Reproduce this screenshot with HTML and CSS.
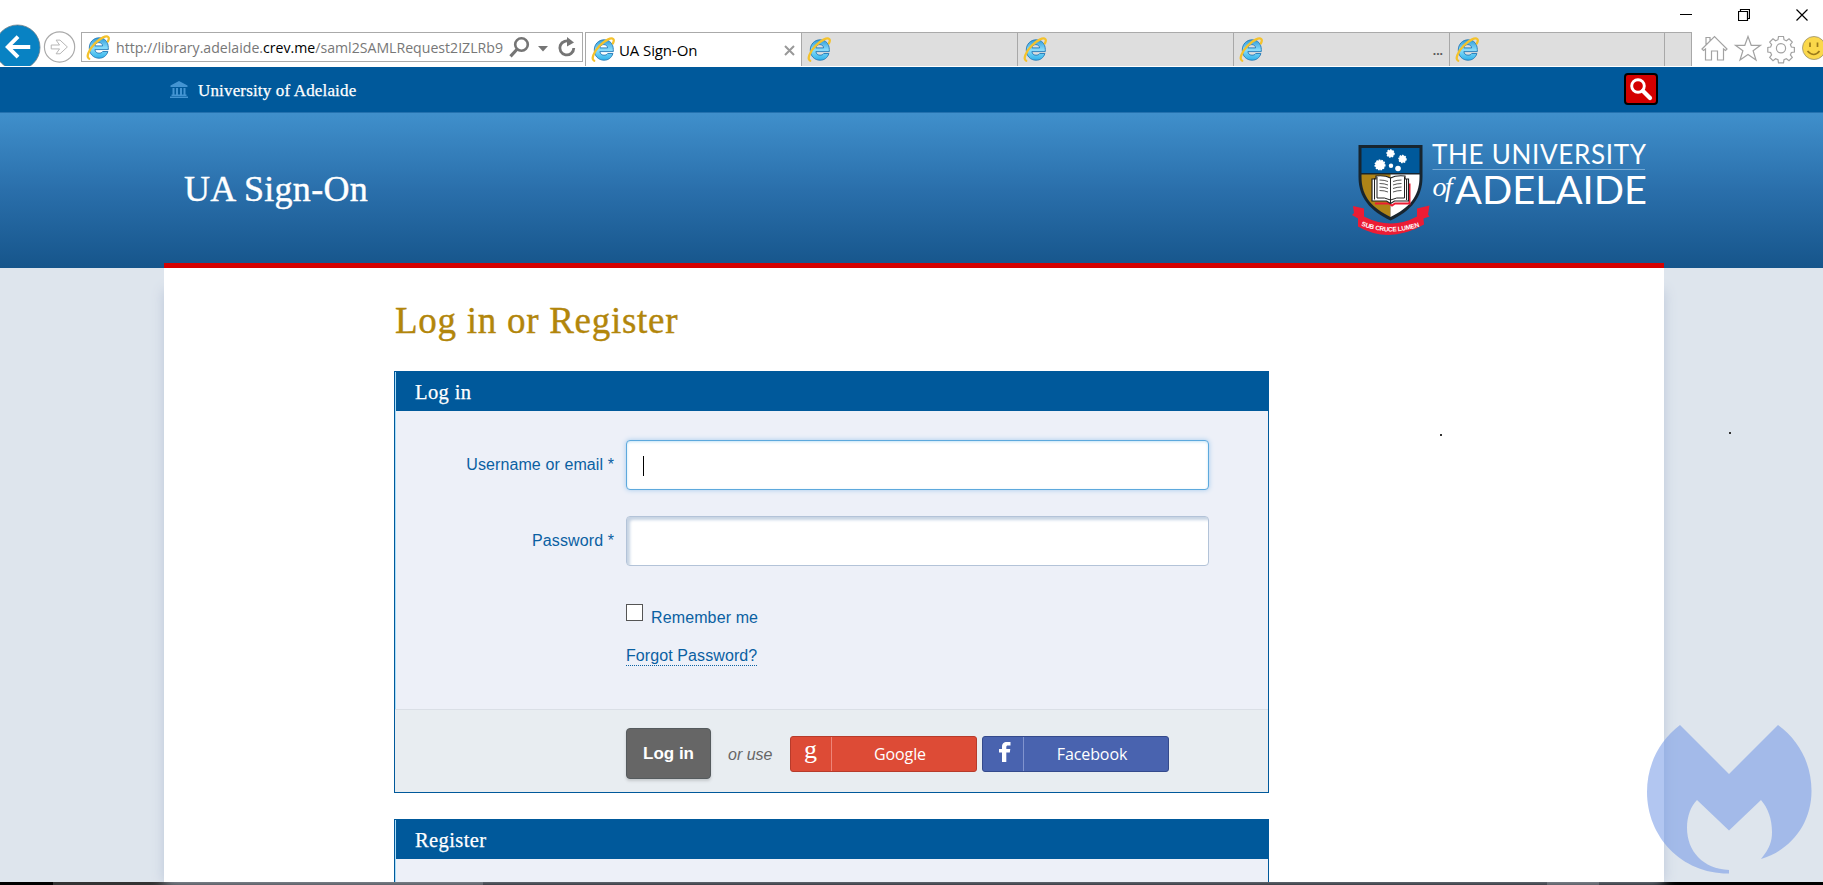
FILE: index.html
```
<!DOCTYPE html>
<html lang="en">
<head>
<meta charset="utf-8">
<title>UA Sign-On</title>
<link rel="stylesheet" href="styles.css">
</head>
<body>
<svg width="0" height="0" class="defs">
  <defs>
    <linearGradient id="ieBlue" x1="0" y1="0" x2="0" y2="1">
      <stop offset="0" stop-color="#2f9bdb"/><stop offset=".5" stop-color="#8adcf9"/><stop offset="1" stop-color="#2fb2ea"/>
    </linearGradient>
    <symbol id="ie" viewBox="0 0 24 25">
      <path d="M22.300 14.600H8.900c.2 2.300 1.900 3.600 4.100 3.600 1.700 0 2.900-.5 3.700-1.700h5.200c-1.300 4.300-4.600 6.700-8.700 6.700-5.900 0-9.900-4.300-9.900-10.100 0-6 4.200-10.300 9.900-10.300 5.700 0 9.100 4.200 9.100 9.800zM8.900 10.900h7.700c-.2-2.100-1.700-3.300-3.800-3.300s-3.600 1.300-3.900 3.300z" fill="url(#ieBlue)" stroke="#2278b5" stroke-width=".9"/>
      <path d="M3.200 23.800C-.2 22.300 2.600 15 8.600 8.800 14 3.200 20.200.2 22.200 2c.9.900.7 2.500-.3 4.400" fill="none" stroke="#f4c22c" stroke-width="2.300" stroke-linecap="round"/>
    </symbol>
  </defs>
</svg>

<header class="chrome">
  <div class="titlebar">
    <svg width="12" height="12" viewBox="0 0 12 12"><path d="M0 5.500h12" stroke="#000"/></svg>
    <svg width="12" height="12" viewBox="0 0 12 12"><path d="M.5 2.500h9v9h-9zM2.500 2.500v-2h9v9h-2" fill="none" stroke="#000" stroke-width="1.200"/></svg>
    <svg width="12" height="12" viewBox="0 0 12 12"><path d="M.5.5l11 11M11.500.5l-11 11" stroke="#000" stroke-width="1.200"/></svg>
  </div>
  <div class="toolbar">
    <svg class="nav" width="81" height="43" viewBox="0 0 81 43">
      <circle cx="17" cy="24" r="23" fill="#0882c3" stroke="#6f7f88" stroke-width=".8"/>
      <path d="M30 23.500H7M17.500 13L7 23.500l10.500 10.500" fill="none" stroke="#fff" stroke-width="4"/>
      <circle cx="60" cy="23.500" r="15.500" fill="#fff" stroke="#aaa" stroke-width="1.200"/>
      <path d="M51.500 21.500h8.500l-3.500-5h4l7.500 7-7.500 7h-4l3.500-5h-8.500z" fill="#fff" stroke="#b4b4b4"/>
    </svg>
    <div class="address">
      <svg class="ie" width="24" height="25"><use href="#ie"/></svg>
      <svg class="url" width="390" height="28"><text x="0" y="20" textLength="387" lengthAdjust="spacingAndGlyphs">http://library.adelaide.<tspan fill="#000">crev.me</tspan>/saml2SAMLRequest2IZLRb9</text></svg>
      <svg width="70" height="28" viewBox="0 0 70 28">
        <circle cx="15.500" cy="11.500" r="6.300" fill="none" stroke="#757575" stroke-width="2.600"/>
        <path d="M11.300 16L4.500 23.300" stroke="#757575" stroke-width="3.200"/>
        <path d="M32 13h10l-5 5.500z" fill="#757575"/>
        <path d="M64.500 9A7 7 0 1 0 67.800 15" fill="none" stroke="#757575" stroke-width="2.800"/>
        <path d="M61 4l7 5.500-7 4z" fill="#757575"/>
      </svg>
    </div>
    <div class="tabs">
      <div class="tab active"><svg class="ie" width="24" height="25"><use href="#ie"/></svg><span>UA Sign-On</span>
        <svg class="close" width="11" height="11" viewBox="0 0 11 11"><path d="M1 1l9 9M10 1l-9 9" stroke="#999" stroke-width="2"/></svg></div>
      <div class="tab"><svg class="ie" width="24" height="25"><use href="#ie"/></svg></div>
      <div class="tab"><svg class="ie" width="24" height="25"><use href="#ie"/></svg></div>
      <div class="tab"><svg class="ie" width="24" height="25"><use href="#ie"/></svg><b>...</b></div>
      <div class="tab"><svg class="ie" width="24" height="25"><use href="#ie"/></svg></div>
      <div class="newtab"></div>
    </div>
    <svg class="tools" width="123" height="43" viewBox="0 0 123 43">
      <g fill="#fff" stroke="#a2a2a2" stroke-width="1.200">
        <path d="M2 25L14.500 12.500 27 25l-1.500 1.500-2-1.500V36h-6v-9h-6v9h-6V25l-2 1.500zM6 20.500v-7h4v3.500"/>
        <path d="M48 12.500l3.200 8.800h9.300l-7.400 5.500 2.900 9.200-8-5.600-8 5.600 2.900-9.200-7.400-5.500h9.300z"/>
        <path d="M78.500 12.500h5l.5 3.200 2.400 1 2.600-1.900 3.300 3.300-1.900 2.600 1 2.300 3 .5v4.500l-3 .5-1 2.400 1.900 2.500-3.300 3.300-2.600-1.900-2.400 1-.5 3h-5l-.5-3-2.400-1-2.600 1.900-3.300-3.300 1.900-2.500-1-2.400-2.800-.5v-4.500l2.800-.5 1-2.300-1.900-2.600 3.300-3.300 2.600 1.900 2.400-1z"/>
        <circle cx="81" cy="24.200" r="4.600"/>
      </g>
      <circle cx="114" cy="24" r="11.500" fill="#fbd84b" stroke="#999072" stroke-width=".8"/>
      <path d="M110 18.500V23M117.500 18.500V23M107.500 27q6.500 7 12 0" fill="none" stroke="#9b7a1b" stroke-width="1.700"/>
    </svg>
  </div>
</header>

<div class="topbar">
  <a class="uni">
    <svg width="18" height="17" viewBox="0 0 18 17"><path d="M9 0l8.500 4.500V6H.5V4.500zM2.500 7h2v6.500h-2zM6 7h2v6.500H6zM10 7h2v6.500h-2zM13.500 7h2v6.500h-2zM1.500 13.500h15V15h-15zM0 15.500h18V17H0z" fill="#4394d2"/></svg>
    <span>University of Adelaide</span>
  </a>
  <div class="search"><svg width="30" height="28" viewBox="0 0 30 28"><circle cx="12" cy="11" r="6.300" fill="none" stroke="#fff" stroke-width="2.900"/><path d="M17 16l7 7" stroke="#fff" stroke-width="4.200" stroke-linecap="round"/></svg></div>
</div>

<div class="banner">
  <h2>UA Sign-On</h2>
  <svg class="logo" width="300" height="100" viewBox="1350 140 300 100">
    <path d="M1353 206l11 2.500v8q27 14 53 0v-8l12.500-3-1.500 9 1.500 2-6 2 .5 6q-35 20-66 2v-8l-6-3.500 2-2z" fill="#ec1c34"/>
    <path d="M1358.500 145h64v32c0 21-12 34-32 43.500-20-9.500-32-22.500-32-43.500z" fill="#17252f"/>
    <path d="M1361.500 148h58v25h-58z" fill="#00599b"/>
    <path d="M1361.500 174.500h29V217c-18-9-29-20-29-40z" fill="#af8417"/>
    <path d="M1390.500 174.500h29v2.500c0 20-11 31-29 40z" fill="#fff"/>
    <g fill="none" stroke="#fff" stroke-dasharray="1.600 1">
      <circle cx="1390.500" cy="153.500" r="3.500" stroke-width="1.500"/><circle cx="1402.500" cy="159" r="3.500" stroke-width="1.500"/><circle cx="1380" cy="165" r="4.800" stroke-width="1.500"/>
    </g>
    <g fill="#fff"><circle cx="1390.500" cy="153.500" r="3.500"/><circle cx="1402.500" cy="159" r="3.500"/><circle cx="1380" cy="165" r="4.800"/><circle cx="1391" cy="165.700" r="2.200"/><circle cx="1398" cy="168.500" r="2.800"/></g>
    <path d="M1375 203.500h14l3 2 3-2h14.500v-20" fill="none" stroke="#ec1c34" stroke-width="2"/>
    <path d="M1372 179h4v-3q9-1 14.500 2 5.500-3 14.500-2v3h3.500v22h-14l-4 2.500-4-2.500H1372z" fill="#fff" stroke="#222" stroke-width="1.200"/>
    <path d="M1374.500 178v21.500M1377 177v21q8-1 13.500 2 5.500-3 14-2v-21M1406.500 179v21M1390.500 178v26" fill="none" stroke="#222"/>
    <path d="M1379.500 180q5 0 8.500 1.500m-8.500 2q5 0 8.500 1.500m-8.500 2q5 0 8.500 1.500m-8.500 2q5 0 8.500 1.500M1393 181.500q4-1.500 8.500-1.500m-8.500 5q4-1.500 8.500-1.500m-8.500 5q4-1.500 8.500-1.500m-8.500 5q4-1.500 8.500-1.500" fill="none" stroke="#444" stroke-width=".9"/>
    <path id="motto" d="M1361 225.500Q1391 237.500 1422 225.500" fill="none"/>
    <text class="motto"><textPath href="#motto" textLength="60">SUB CRUCE LUMEN</textPath></text>
    <text class="word" x="1432" y="164" font-size="26" textLength="214">THE UNIVERSITY</text>
    <path d="M1432.500 169.500H1645" stroke="#75a9d4"/>
    <text class="of" x="1432.500" y="196" textLength="20">of</text>
    <text class="word" x="1455" y="203.500" font-size="39" textLength="192" lengthAdjust="spacingAndGlyphs">ADELAIDE</text>
  </svg>
</div>

<main class="page">
  <div class="sheet">
    <h1>Log in or Register</h1>
    <section class="panel">
      <h3>Log in</h3>
      <div class="form">
        <div class="row"><label>Username or email *</label><div class="input focus"><i></i></div></div>
        <div class="row"><label>Password *</label><div class="input"></div></div>
        <div class="remember"><span class="check"></span><span>Remember me</span></div>
        <div class="forgot"><a>Forgot Password?</a></div>
      </div>
      <div class="actions">
        <div class="login">Log in</div>
        <em>or use</em>
        <div class="social google">
          <div class="glyph g">g</div><span>Google</span>
        </div>
        <div class="social facebook">
          <div class="glyph"><svg width="12" height="20" viewBox="0 0 12 20"><path d="M3 20v-9.500H0V7h3V5c0-3.500 1.600-5 5-5h3.500v3.500H9c-1.300 0-1.700.6-1.700 1.700V7h4l-.5 3.500H7.300V20z" fill="#fff"/></svg></div><span>Facebook</span>
        </div>
      </div>
    </section>
    <section class="panel next"><h3>Register</h3><div class="form"></div></section>
  </div>
  <span class="speck one"></span><span class="speck two"></span>
  <svg class="badge" width="166" height="150" viewBox="0 0 166 150">
    <path d="M33 0L82 49 131 0C153 16 164.500 40 164.500 66c0 32-20 59-50.500 68 9-11 11-18 11-27 0-13-4-24-11-32L82 105.500 50 75c-6 6-10 16-10 28 0 23 16 41 42 42v3.500C35 149 0 112 0 67 0 40 12 16 33 0z" fill="#7096e6" fill-opacity=".54"/>
  </svg>
</main>
<footer class="taskbar"><i></i><b></b></footer>
</body>
</html>
```
FILE: styles.css
```
* { box-sizing: border-box; }
body {
  margin: 0; width: 1823px; height: 885px; overflow: hidden;
  display: flex; flex-direction: column; background: #fff;
  font-family: "Liberation Sans", Arial, sans-serif; font-size: 16px; color: #0a60a2;
}
svg { display: block; flex: none; }
h1, h2, h3 { margin: 0; font-family: "Liberation Serif", Georgia, serif; font-weight: 400; -webkit-text-stroke: .4px currentColor; }
.defs { position: absolute; }

/* Browser frame */
.chrome { height: 67px; flex: none; display: flex; flex-direction: column; }
.titlebar { height: 24px; flex: none; display: flex; justify-content: flex-end; gap: 46px; padding: 9px 15px 0 0; }
.toolbar { height: 43px; display: flex; }
.nav { height: 42px; }
.address {
  width: 502px; height: 30px; margin-top: 8px; border: 1px solid #aaa; flex: none;
  display: flex; padding-left: 4px;
}
.address .ie { margin-top: 2px; }
.url { margin-left: 6px; overflow: visible; }
.url text { font: 15px "Open Sans", sans-serif; fill: #777; }
.tabs { display: flex; margin: 8px 0 0 2px; height: 34px; width: 1108px; border-top: 1px solid #aaa; background: #dedede; }
.tab { width: 216px; flex: none; border-left: 1px solid #a8a8a8; padding: 4px 0 0 5px; display: flex; }
.tab.active { background: #fff; }
.tab span { font: 15px/24px "Open Sans", sans-serif; color: #000; margin: 1px 0 0 4px; letter-spacing: -.1px; width: 165px; }
.tab .close { margin-top: 8px; }
.tab b { margin-left: auto; padding-right: 6px; font: bold 12px/28px "Open Sans", sans-serif; color: #555; }
.newtab { flex: 1; border: solid #a8a8a8; border-width: 0 1px; margin-left: -1px; }
.tools { margin-left: 8px; }

/* Site header */
.topbar {
  height: 45px; flex: none; background: #00599b; display: flex; justify-content: space-between;
  padding: 6px 165px 0 170px;
}
.uni { display: flex; gap: 10px; padding-top: 8px; }
.uni span { font: 17px/20px "Liberation Serif", Georgia, serif; color: #fff; letter-spacing: .16px; -webkit-text-stroke: .25px #fff; }
.search { width: 34px; height: 32px; background: #d40000; border: 2px solid #000; border-radius: 4px; }
.banner {
  height: 156px; flex: none; display: flex; justify-content: space-between; padding: 28px 173px 0 184px;
  background: linear-gradient(#4090cc, #2a6fab 50%, #16558b);
  box-shadow: inset 0 1px #2472b0;
}
.banner h2 { font-size: 36px; line-height: 40px; color: #fff; letter-spacing: .3px; margin-top: 29px; }
.word { font-family: Lato, sans-serif; fill: #fff; }
.of { font: italic 28px "Liberation Serif", serif; fill: #fff; }
.motto { font: bold 6.500px "Liberation Sans", sans-serif; fill: #fff; }

/* Page sheet */
.page { flex: 1; min-height: 0; background: #dee5ed; position: relative; padding: 0 159px 0 164px; }
.sheet {
  height: 619px; margin-top: -5px; background: #fff; border-top: 5px solid #d40000; overflow: hidden;
  padding: 30px 395px 0 230px; position: relative;
}
.page::before { content: ""; position: absolute; left: 164px; top: 22px; width: 1500px; bottom: 0; box-shadow: 0 0 12px #bcc7d9; }
h1 { font-size: 37px; line-height: 45px; height: 44px; color: #b2860b; letter-spacing: .72px; padding-left: 1px; }
.panel { margin-top: 29px; border: 1px solid #00599b; height: 422px; }
.panel.next { margin-top: 26px; }
.panel h3 { height: 39px; background: #00599b; color: #fff; font-size: 20.500px; line-height: 40px; letter-spacing: .4px; padding-left: 19px; border-left: 1px solid #a9ddf8; -webkit-text-stroke-width: .25px; }
.form { background: #edf0f8; height: 298px; padding: 29px 59px 0 0; border-left: 1px solid #a9ddf8; }
.row { display: flex; height: 76px; justify-content: space-between; }
label { width: 218px; text-align: right; line-height: 50px; letter-spacing: .1px; }
.input { width: 583px; height: 50px; background: #fff; border: 1px solid #b3c3d8; border-radius: 4px; box-shadow: inset 3px 3px 3px #c7d4e4; }
.input.focus { border-color: #5da9dd; box-shadow: 0 0 5px #a3caed, inset 0 1px 3px #c5e4f7; padding: 15px 0 0 16px; }
.input i { display: block; width: 1px; height: 20px; background: #000; }
.remember { display: flex; gap: 8px; padding: 12px 0 0 230px; line-height: 25px; letter-spacing: .12px; }
.remember span:last-child { margin-top: 1px; }
.check { width: 17px; height: 17px; border: 1px solid #555; background: #fff; }
.forgot { padding: 16px 0 0 230px; line-height: 20px; letter-spacing: .09px; }
.forgot a { border-bottom: 1px dotted #0a60a2; display: inline-block; height: 20px; }
.actions { height: 83px; background: #e8edf1; border-top: 1px solid #dadfe6; padding: 18px 0 0 231px; display: flex; }
.login {
  width: 85px; height: 51px; background: #666; border: 1px solid #555b5e; border-radius: 4px;
  color: #fff; font-weight: bold; font-size: 17px; line-height: 49px; text-align: center; box-shadow: 0 2px 3px #c5c9cc;
}
.actions em { color: #666; line-height: 53px; margin-left: 17px; width: 62px; }
.social { width: 187px; height: 36px; margin-top: 8px; border-radius: 3px; display: flex; color: #fff; }
.social span { flex: 1; text-align: center; font: 16px/35px "Open Sans", sans-serif; padding-right: 8px; letter-spacing: -.1px; }
.google { background: #dd4b36; border: 1px solid #b73b2b; }
.facebook { background: #4963af; border: 1px solid #344a8c; margin-left: 5px; }
.glyph { width: 41px; border-right: 1px solid #ee8578; padding: 5px 0 0 16px; }
.facebook .glyph { border-color: #8194ce; }
.glyph.g { font: 26px/24px "Liberation Serif", serif; padding: 1px 0 0 13px; }

.speck { position: absolute; width: 2px; height: 2px; background: #333; }
.one { left: 1440px; top: 166px; }
.two { left: 1729px; top: 164px; }
.badge { position: absolute; left: 1647px; top: 457px; }
.taskbar { height: 3px; flex: none; background: #000; display: flex; }
.taskbar i { margin-left: 53px; width: 430px; background: #333; }
.taskbar b { margin-left: 1064px; width: 52px; background: #333; }
```
